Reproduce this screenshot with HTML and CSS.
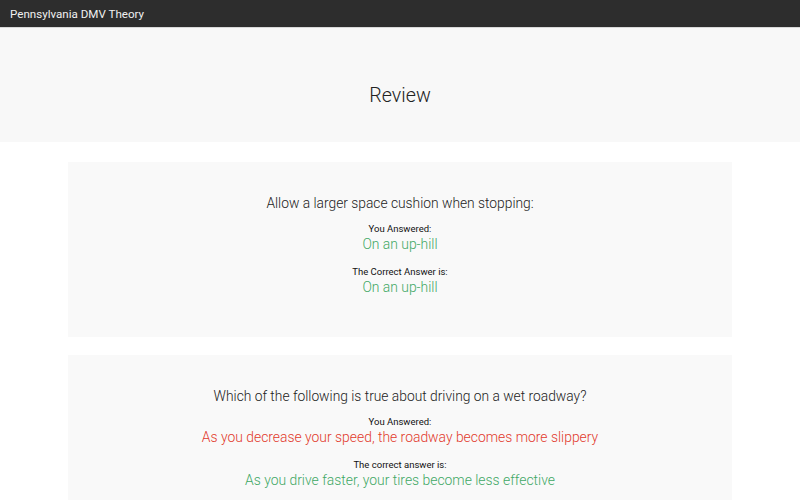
FILE: index.html
```html
<!DOCTYPE html>
<html>
<head>
    <title>Pennsylvania DMV Theory - Review</title>
    <link rel="stylesheet" href="styles.css">
</head>
<body>
    <div class="navbar">Pennsylvania DMV Theory</div>

    <div class="header">
        <h1>Review</h1>
    </div>

    <div class="review">
        <div class="card">
            <p class="question">Allow a larger space cushion when stopping:</p>
            <p class="label">You Answered:</p>
            <p class="answer correct">On an up-hill</p>
            <p class="label">The Correct Answer is:</p>
            <p class="answer correct">On an up-hill</p>
        </div>

        <div class="card">
            <p class="question">Which of the following is true about driving on a wet roadway?</p>
            <p class="label">You Answered:</p>
            <p class="answer wrong">As you decrease your speed, the roadway becomes more slippery</p>
            <p class="label">The correct answer is:</p>
            <p class="answer correct">As you drive faster, your tires become less effective</p>
        </div>
    </div>
</body>
</html>
```

FILE: styles.css
```css
body {
    font-family: Roboto, "Liberation Sans", Arial, sans-serif;
    margin: 0;
    padding: 0;
    background-color: #fff;
    color: #333;
}

.navbar {
    background-color: #2d2d2d;
    color: #f0f0f0;
    font-size: 11.6px;
    height: 28px;
    line-height: 28px;
    padding-left: 10px;
    border-bottom: 1px solid #d8d8d8;
    box-sizing: border-box;
}

.header {
    background-color: #f8f8f8;
    height: 114px;
    padding-top: 55px;
    box-sizing: border-box;
    text-align: center;
}

.header h1 {
    margin: 0;
    font-size: 19.7px;
    font-weight: 300;
    line-height: 26px;
    color: #222;
}

.review {
    display: flex;
    flex-direction: column;
    align-items: center;
    gap: 18px;
    padding-top: 20px;
}

.card {
    background-color: #f9f9f9;
    width: 664px;
    padding: 31px 20px 41px;
    box-sizing: border-box;
    text-align: center;
}

.card p {
    margin: 0;
}

.question {
    font-size: 13.8px;
    font-weight: 300;
    line-height: 20px;
    color: #222;
    margin-bottom: 9px !important;
}

.label {
    font-size: 9.5px;
    line-height: 13px;
    color: #111;
}

.answer {
    font-size: 13.9px;
    font-weight: 300;
    line-height: 18px;
    margin-bottom: 12px !important;
}

.answer:last-child {
    margin-bottom: 0 !important;
}

.correct {
    color: #3fa865;
}

.wrong {
    color: #e2392c;
}
```
